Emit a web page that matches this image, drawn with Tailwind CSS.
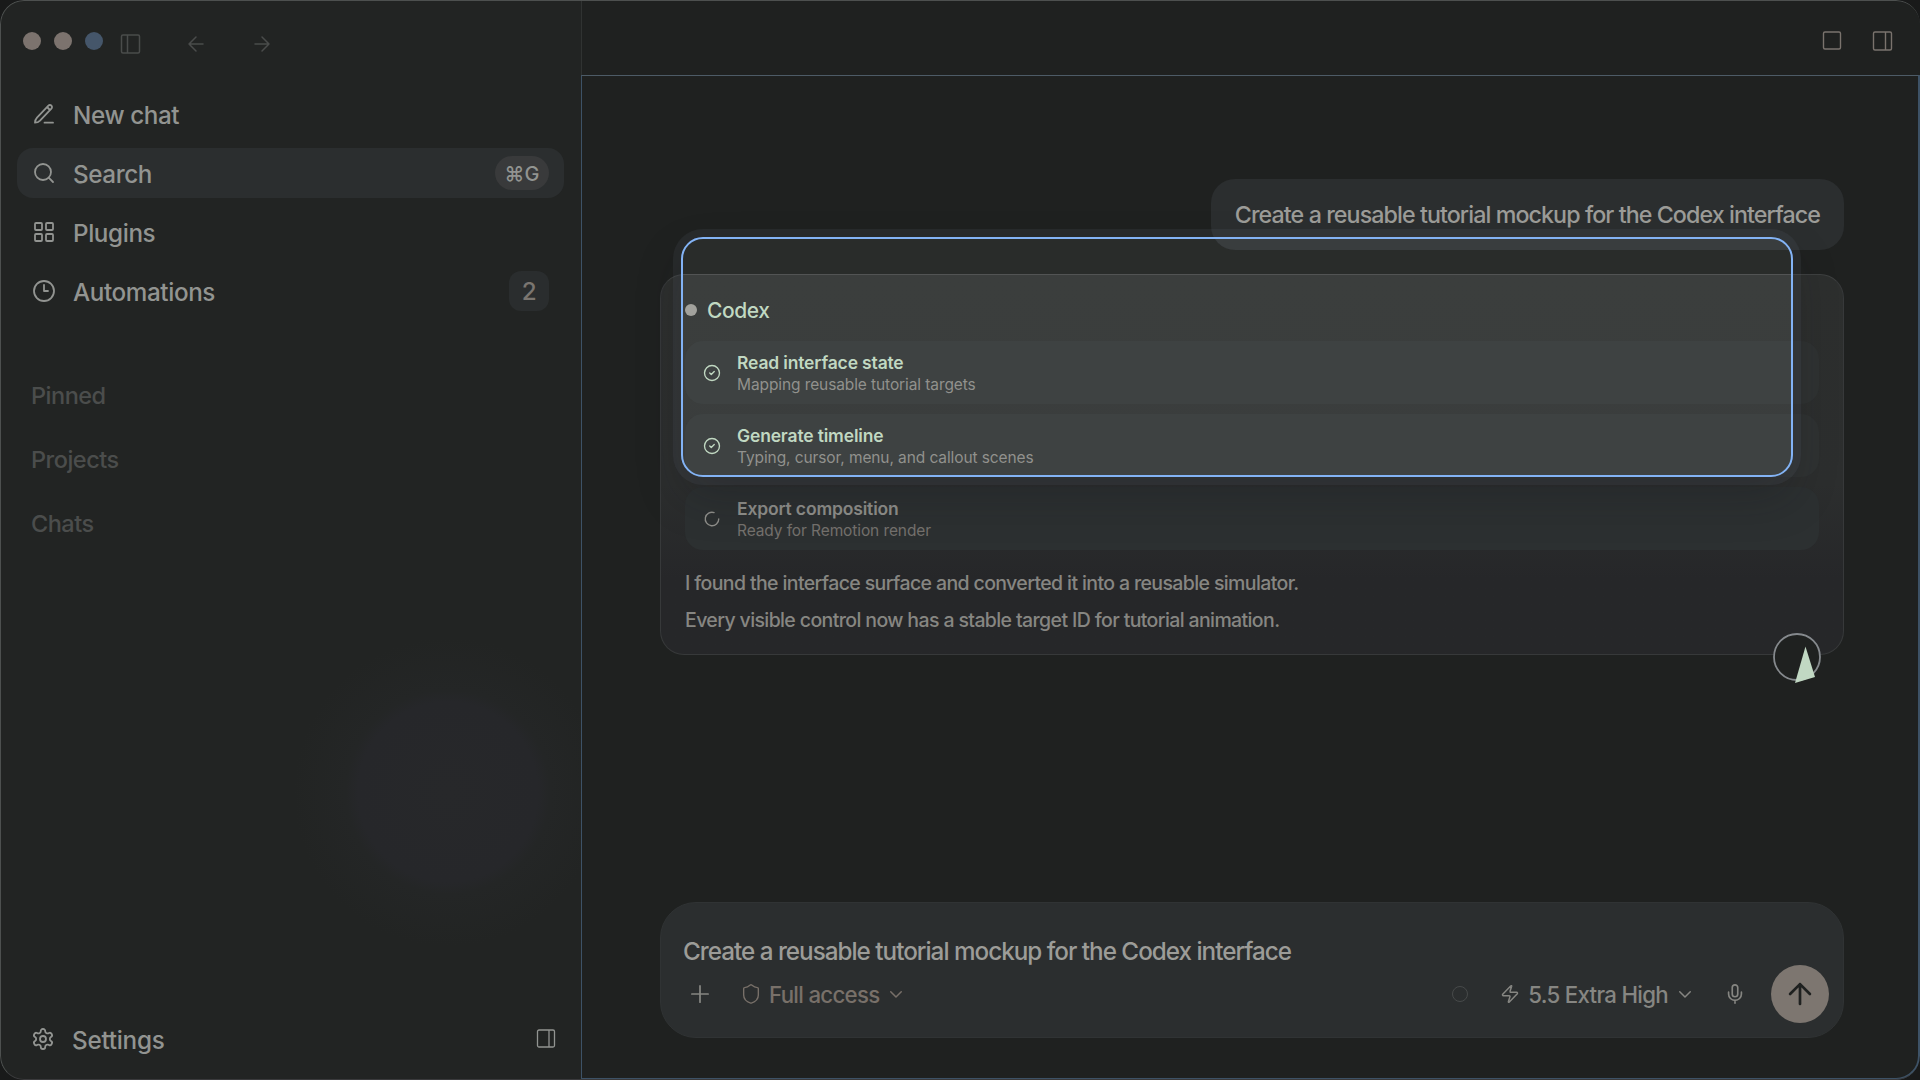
<!DOCTYPE html>
<html lang="en">
    <head>
        <meta charset="UTF-8" />
        <meta name="viewport" content="width=device-width, initial-scale=1.0" />
        <title>Codex</title>
        <script src="https://cdn.jsdelivr.net/npm/@tailwindcss/browser@4"></script>
        <style>
            * {
                font-family: "Inter", "Liberation Sans", sans-serif;
            }
        </style>
    </head>
    <body class="w-[1920px] h-[1080px] overflow-hidden bg-[#191a1a]">
        <div class="relative flex w-full h-full rounded-[24px] overflow-hidden bg-[#1f2120]">
            <!-- sidebar -->
            <aside class="relative flex flex-col w-[581px] h-full shrink-0 overflow-hidden bg-[#222423] text-[#929491]">
                <div class="absolute left-[293px] top-[637px] size-[310px] rounded-full bg-[radial-gradient(closest-side,#27282a_0%,#26272a_58%,#242626_66%,#222423_100%)]"></div>
                <div class="flex items-center h-[89px] pl-[23px] pb-[7px]">
                    <div class="flex gap-[13px]">
                        <span class="size-[18px] rounded-full bg-[#7c736e]"></span>
                        <span class="size-[18px] rounded-full bg-[#7c736e]"></span>
                        <span class="size-[18px] rounded-full bg-[#45566a]"></span>
                    </div>
                    <div class="flex gap-[42px] pl-[15px] pt-[6px] text-[#4a4c4b]">
                        <svg class="size-6" viewBox="0 0 24 24" fill="none" stroke="currentColor" stroke-width="1.5"><rect x="3.5" y="3" width="18" height="18" rx="1.5" /><path d="M9.5 3v18" /></svg>
                        <svg class="size-6" viewBox="0 0 24 24" fill="none" stroke="currentColor" stroke-width="1.5" stroke-linecap="round" stroke-linejoin="round"><path d="m12 19-7-7 7-7M19 12H5" /></svg>
                        <svg class="size-6" viewBox="0 0 24 24" fill="none" stroke="currentColor" stroke-width="1.5" stroke-linecap="round" stroke-linejoin="round"><path d="M5 12h14M12 5l7 7-7 7" /></svg>
                    </div>
                </div>

                <nav class="relative flex flex-col gap-[9px] pl-[17px] pr-[17px] text-[24.25px] font-[450] tracking-[-0.4px]">
                    <div class="flex items-center gap-[17px] h-[50px] px-[15px]">
                        <svg class="size-6" viewBox="0 0 24 24" fill="none" stroke="currentColor" stroke-width="1.8" stroke-linecap="round" stroke-linejoin="round"><path d="M12.5 20.7H21M16.4 3.6a2.12 2.12 0 0 1 3 3L8 18.6c-1.4 1.4-3 2.1-5 2.1 0-2 .7-3.6 2-5zM15 5l3 3" /></svg>
                        <span class="pt-[5px]">New chat</span>
                    </div>
                    <div class="flex items-center gap-[17px] h-[50px] px-[15px] rounded-2xl bg-[#2b2e2f]">
                        <svg class="size-6" viewBox="0 0 24 24" fill="none" stroke="currentColor" stroke-width="1.8" stroke-linecap="round" stroke-linejoin="round"><circle cx="11" cy="11" r="8" /><path d="m21 21-4.3-4.3" /></svg>
                        <span class="pt-[5px]">Search</span>
                        <span class="flex items-center justify-center ml-auto w-[54px] h-[34px] pt-px rounded-full bg-[#393a3b] text-[20px] tracking-normal">⌘G</span>
                    </div>
                    <div class="flex items-center gap-[17px] h-[50px] px-[15px]">
                        <svg class="size-6" viewBox="0 0 24 24" fill="none" stroke="currentColor" stroke-width="1.8"><rect x="3" y="3" width="7" height="7" rx="1" /><rect x="14" y="3" width="7" height="7" rx="1" /><rect x="14" y="14" width="7" height="7" rx="1" /><rect x="3" y="14" width="7" height="7" rx="1" /></svg>
                        <span class="pt-[5px]">Plugins</span>
                    </div>
                    <div class="flex items-center gap-[17px] h-[50px] px-[15px]">
                        <svg class="size-6" viewBox="0 0 24 24" fill="none" stroke="currentColor" stroke-width="1.8" stroke-linecap="round" stroke-linejoin="round"><circle cx="12" cy="12" r="10" /><path d="M12 6v6h4" /></svg>
                        <span class="pt-[5px]">Automations</span>
                        <span class="flex items-center justify-center ml-auto size-10 pt-[3px] rounded-xl bg-[#2a2d2e] text-[#7a7570]">2</span>
                    </div>
                </nav>

                <div class="relative flex flex-col pl-[31px] pt-[48px] text-[23.5px] font-[450] tracking-[-0.5px] text-[#4b4d4c]">
                    <span class="h-16 leading-16">Pinned</span>
                    <span class="h-16 leading-16">Projects</span>
                    <span class="h-16 leading-16">Chats</span>
                </div>

                <div class="flex items-center gap-[17px] mt-auto mb-[16px] h-[50px] pl-[31px] pr-[23px] text-[24.25px] font-[450] tracking-[-0.25px]">
                    <svg class="size-6" viewBox="0 0 24 24" fill="none" stroke="currentColor" stroke-width="1.8" stroke-linecap="round" stroke-linejoin="round"><path d="M12.22 2h-.44a2 2 0 0 0-2 2v.18a2 2 0 0 1-1 1.73l-.43.25a2 2 0 0 1-2 0l-.15-.08a2 2 0 0 0-2.73.73l-.22.38a2 2 0 0 0 .73 2.73l.15.1a2 2 0 0 1 1 1.72v.51a2 2 0 0 1-1 1.74l-.15.09a2 2 0 0 0-.73 2.73l.22.38a2 2 0 0 0 2.73.73l.15-.08a2 2 0 0 1 2 0l.43.25a2 2 0 0 1 1 1.73V20a2 2 0 0 0 2 2h.44a2 2 0 0 0 2-2v-.18a2 2 0 0 1 1-1.73l.43-.25a2 2 0 0 1 2 0l.15.08a2 2 0 0 0 2.73-.73l.22-.39a2 2 0 0 0-.73-2.73l-.15-.08a2 2 0 0 1-1-1.74v-.5a2 2 0 0 1 1-1.74l.15-.09a2 2 0 0 0 .73-2.73l-.22-.38a2 2 0 0 0-2.73-.73l-.15.08a2 2 0 0 1-2 0l-.43-.25a2 2 0 0 1-1-1.73V4a2 2 0 0 0-2-2z" /><circle cx="12" cy="12" r="3" /></svg>
                    <span class="pt-[5px]">Settings</span>
                    <svg class="size-6 ml-auto" viewBox="0 0 24 24" fill="none" stroke="currentColor" stroke-width="1.3"><rect x="3.5" y="3" width="17" height="17" rx="1.5" /><path d="M15 3v17" /></svg>
                </div>
            </aside>

            <main class="flex flex-col flex-1">
                <header class="flex items-center justify-end gap-[26px] h-[75px] pr-[26px] pt-[7px] border-l border-[#303332] text-[#7a736d]">
                    <svg class="size-6" viewBox="0 0 24 24" fill="none" stroke="currentColor" stroke-width="1.4"><rect x="3.5" y="3" width="17" height="17" rx="1.5" /></svg>
                    <svg class="size-6" viewBox="0 0 24 24" fill="none" stroke="currentColor" stroke-width="1.4"><rect x="3.5" y="3" width="18" height="18" rx="1.5" /><path d="M15.5 3v18" /></svg>
                </header>

                <section class="flex flex-col flex-1 pl-[78px] pr-[74px] pb-[40px] rounded-br-[24px] border-2 border-l border-t border-[#3d5266] border-t-[#4d5b66]">
                    <div class="self-end mt-[103px] h-[71px] px-6 rounded-[24px] bg-[#2b2e2f] text-[23.25px] leading-[71px] font-[450] tracking-[-0.92px] text-[#9c9c98]">
                        Create a reusable tutorial mockup for the Codex interface
                    </div>

                    <!-- response card -->
                    <div class="relative mt-6 h-[381px] px-6 pt-[18px] rounded-[24px] border border-[#37393a] border-t-[#3e4040] bg-linear-to-b from-[#2d2f2e] from-0% via-[#2c2e2e] via-55% to-[#262729] to-80%">
                        <div class="flex items-center gap-[10px] h-[34px] text-[21px] font-medium tracking-[-0.4px] text-[#92a493]">
                            <span class="size-3 rounded-full bg-[#7b7b77]"></span>
                            <span class="pt-[2px]">Codex</span>
                        </div>
                        <div class="flex flex-col gap-[10px] mt-[14px]">
                            <div class="flex items-center gap-4 h-[63px] px-[18px] rounded-[18px] bg-[#2f3232] text-[#92a493]">
                                <svg class="size-[18px]" viewBox="0 0 24 24" fill="none" stroke="currentColor" stroke-width="1.8" stroke-linecap="round" stroke-linejoin="round"><circle cx="12" cy="12" r="10" /><path d="m9 12 2 2 4-4" /></svg>
                                <div class="flex flex-col pt-[3px] text-[15.5px] leading-[22px] tracking-[-0.1px]">
                                    <span class="text-[17.5px] font-semibold tracking-[-0.16px]">Read interface state</span>
                                    <span class="text-[#6e6e6b]">Mapping reusable tutorial targets</span>
                                </div>
                            </div>
                            <div class="flex items-center gap-4 h-[63px] px-[18px] rounded-[18px] bg-[#2f3232] text-[#92a493]">
                                <svg class="size-[18px]" viewBox="0 0 24 24" fill="none" stroke="currentColor" stroke-width="1.8" stroke-linecap="round" stroke-linejoin="round"><circle cx="12" cy="12" r="10" /><path d="m9 12 2 2 4-4" /></svg>
                                <div class="flex flex-col pt-[3px] text-[15.5px] leading-[22px] tracking-[-0.1px]">
                                    <span class="text-[17.5px] font-semibold tracking-[-0.16px]">Generate timeline</span>
                                    <span class="text-[#6e6e6b]">Typing, cursor, menu, and callout scenes</span>
                                </div>
                            </div>
                            <div class="flex items-center gap-4 h-[63px] px-[18px] rounded-[18px] bg-[#2c3031] text-[#8f8f8b]">
                                <svg class="size-[18px]" viewBox="0 0 24 24" fill="none" stroke="currentColor" stroke-width="1.8" stroke-linecap="round"><path d="M21 12a9 9 0 1 1-6.219-8.56" /></svg>
                                <div class="flex flex-col pt-[3px] text-[15.5px] leading-[22px] tracking-[-0.1px]">
                                    <span class="text-[17.5px] font-semibold tracking-[-0.16px]">Export composition</span>
                                    <span class="text-[#74716d]">Ready for Remotion render</span>
                                </div>
                            </div>
                        </div>
                        <div class="flex flex-col mt-[15px] text-[19.5px] leading-[37px] font-[450] tracking-[-0.62px] text-[#868682]">
                            <p>I found the interface surface and converted it into a reusable simulator.</p>
                            <p>Every visible control now has a stable target ID for tutorial animation.</p>
                        </div>

                        <!-- highlight over the first two steps -->
                        <div class="absolute left-[20px] -top-[38px] w-[1112px] h-[240px] rounded-[22px] border-2 border-[#83b3f5] backdrop-brightness-[1.32] shadow-[0_0_0_8px_rgba(120,130,150,0.1),0_20px_44px_rgba(20,20,22,0.25)]"></div>

                        <!-- cursor -->
                        <svg class="absolute left-[1104px] top-[350px] size-16" viewBox="0 0 64 64" fill="none"><circle cx="32" cy="32" r="23" fill="#1f2120" stroke="#85898d" stroke-width="1.8" /><path d="M40.5 21.5 50 52 30 58z" fill="#c1d8c3" /></svg>
                    </div>

                    <!-- composer -->
                    <div class="flex flex-col mt-auto h-[136px] pl-[22px] pr-[14px] pt-[29px] rounded-[36px] border border-[#303334] bg-[#2b2e2f]">
                        <div class="text-[24.25px] leading-[40px] font-[450] tracking-[-1px] text-[#9c9c98]">Create a reusable tutorial mockup for the Codex interface</div>
                        <div class="flex items-center h-[44px] text-[22.25px] font-[450] tracking-[-0.7px] text-[#868682]">
                            <svg class="size-[26px] ml-[4px]" viewBox="0 0 24 24" fill="none" stroke="currentColor" stroke-width="1.6" stroke-linecap="round"><path d="M4.5 12h15M12 4.5v15" /></svg>
                            <div class="flex items-center ml-[27px] text-[#787069]">
                                <svg class="size-[22px]" viewBox="0 0 24 24" fill="none" stroke="currentColor" stroke-width="1.5" stroke-linejoin="round"><path d="M20 13c0 5-3.5 7.5-7.66 8.95a1 1 0 0 1-.67-.01C7.5 20.5 4 18 4 13V6a1 1 0 0 1 1-1c2 0 4.5-1.2 6.24-2.72a1.17 1.17 0 0 1 1.52 0C14.51 3.81 17 5 19 5a1 1 0 0 1 1 1z" /></svg>
                                <span class="ml-[7px] pt-[2px]">Full access</span>
                                <svg class="size-[18px] ml-[7px]" viewBox="0 0 24 24" fill="none" stroke="currentColor" stroke-width="2" stroke-linecap="round" stroke-linejoin="round"><path d="m5 9 7 7 7-7" /></svg>
                            </div>
                            <span class="size-4 ml-auto rounded-full border-[1.5px] border-[#474a4a]"></span>
                            <svg class="size-[20px] ml-[32px]" viewBox="0 0 24 24" fill="none" stroke="currentColor" stroke-width="1.8" stroke-linecap="round" stroke-linejoin="round"><path d="M4 14a1 1 0 0 1-.78-1.63l9.9-10.2a.5.5 0 0 1 .86.46l-1.92 6.02A1 1 0 0 0 13 10h7a1 1 0 0 1 .78 1.63l-9.9 10.2a.5.5 0 0 1-.86-.46l1.92-6.02A1 1 0 0 0 11 14z" /></svg>
                            <span class="ml-[8px] pt-[2px]">5.5 Extra High</span>
                            <svg class="size-[18px] ml-[8px]" viewBox="0 0 24 24" fill="none" stroke="currentColor" stroke-width="2" stroke-linecap="round" stroke-linejoin="round"><path d="m5 9 7 7 7-7" /></svg>
                            <svg class="size-[22px] ml-[30px]" viewBox="0 0 24 24" fill="none" stroke="currentColor" stroke-width="1.8" stroke-linecap="round" stroke-linejoin="round"><path d="M12 2a3 3 0 0 0-3 3v7a3 3 0 0 0 6 0V5a3 3 0 0 0-3-3ZM19 10v2a7 7 0 0 1-14 0v-2M12 19v3" /></svg>
                            <span class="flex items-center justify-center size-[58px] ml-[25px] rounded-full bg-[#7d7670] text-[#1f2120]">
                                <svg class="size-[34px]" viewBox="0 0 24 24" fill="none" stroke="currentColor" stroke-width="1.9" stroke-linecap="round" stroke-linejoin="round"><path d="m5 12 7-7 7 7M12 19V5" /></svg>
                            </span>
                        </div>
                    </div>
                </section>
            </main>

            <div class="absolute inset-0 rounded-[24px] border border-[#4d504f] border-r-0 border-b-[#3a3a3c] pointer-events-none"></div>
        </div>
    </body>
</html>
